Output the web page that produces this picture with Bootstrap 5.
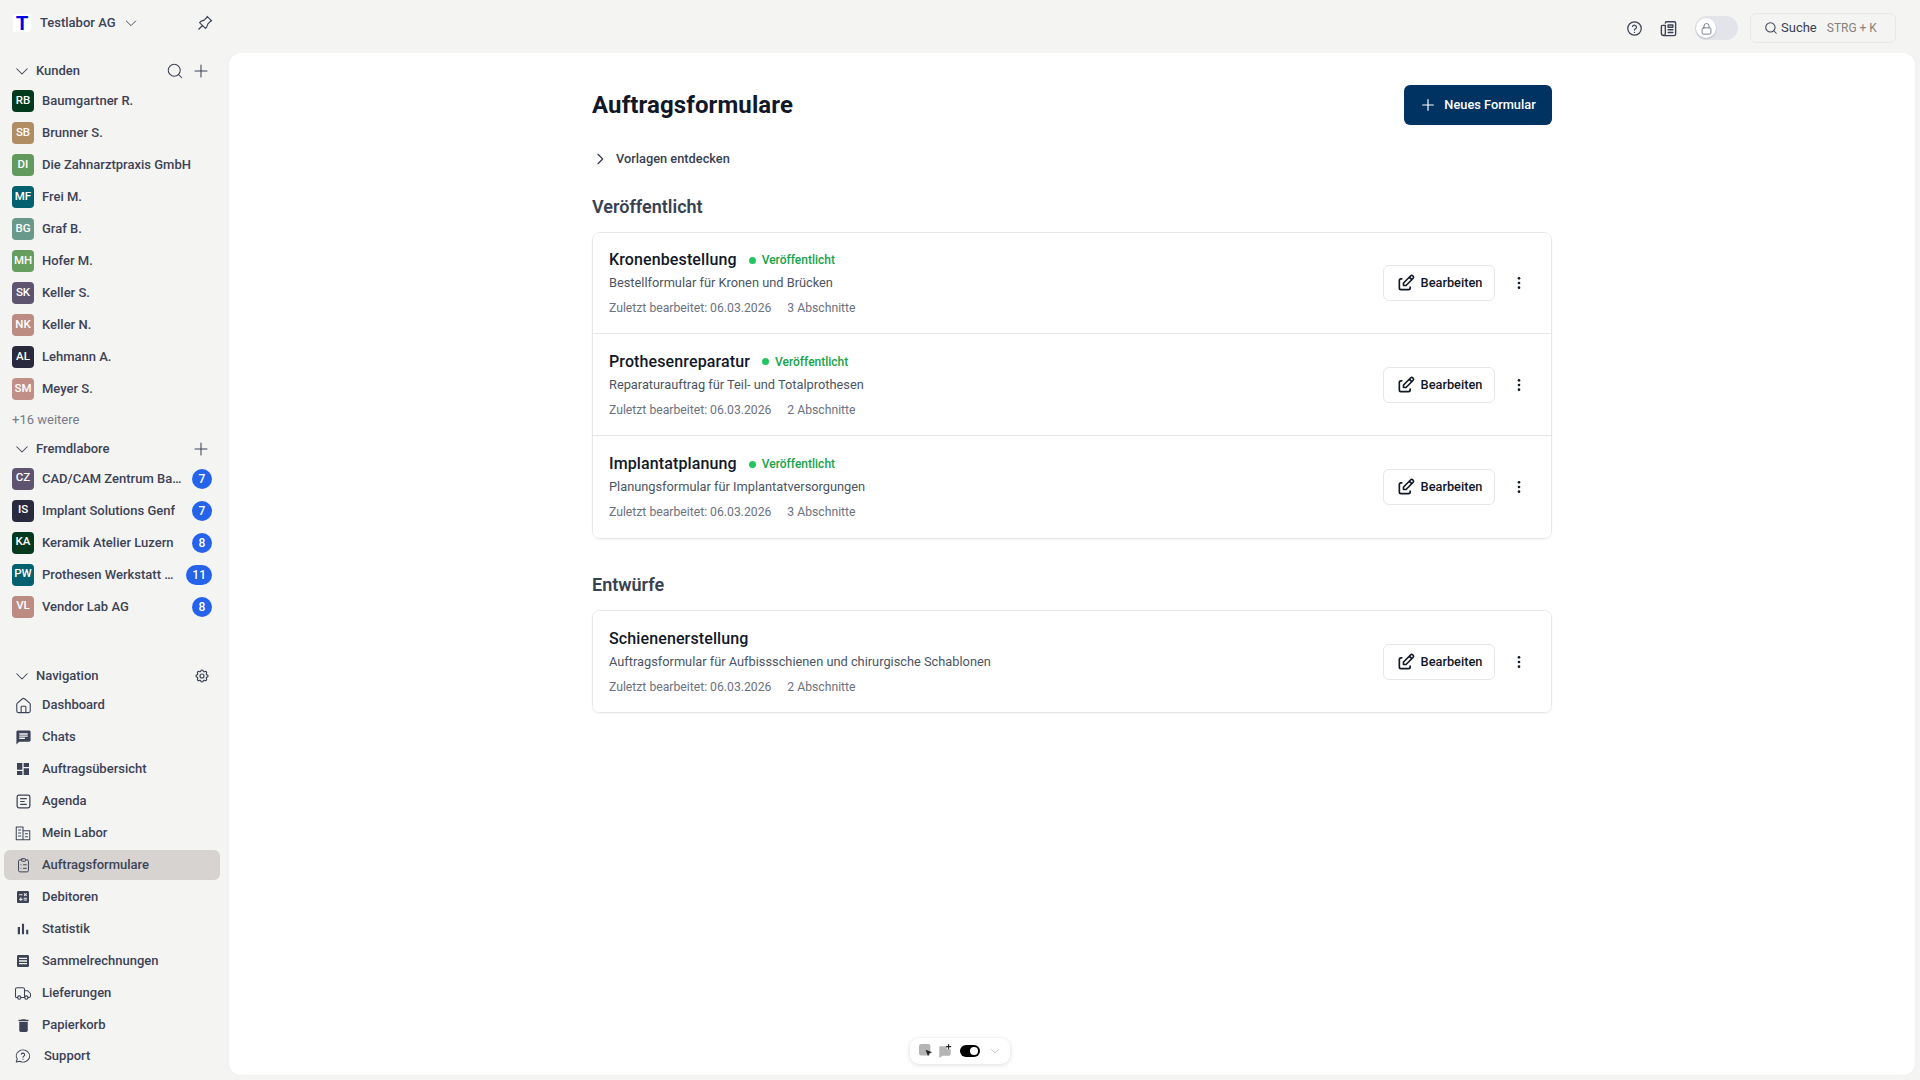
<!DOCTYPE html>
<html lang="de">

<head>
  <meta charset="UTF-8">
  <meta name="viewport" content="width=device-width, initial-scale=1.0">
  <title>Auftragsformulare</title>
  <link href="https://cdn.jsdelivr.net/npm/bootstrap@5.3.0/dist/css/bootstrap.min.css" rel="stylesheet">
  <style>
    html, body { height: 100%; }
    body { font-family: Roboto, "Liberation Sans", sans-serif; background: #f4f4f3; color: #3d4356; font-size: 13px; overflow: hidden; }
    svg { display: block; flex: none; }
    .ico { fill: none; stroke: currentColor; stroke-width: 1.75; stroke-linecap: round; stroke-linejoin: round; }
    .ico-thin { stroke-width: 1.4; }
    .ico-bold { stroke-width: 2; }
    .ico-fill { fill: currentColor; stroke: none; }

    .top-strip { height: 53px; padding: 0 24px 0 13px; }
    .top-left { margin-bottom: 7px; }
    .top-right { margin-top: 3px; }
    .brand-box { width: 18px; height: 18px; background: #fff; color: #0000e6; font: 700 20px/18px "Liberation Sans", sans-serif; text-align: center; border-radius: 2px; }
    .brand-name { font-weight: 500; margin-left: 9px; width: 75px; white-space: nowrap; }
    .pin-btn { margin-left: 56px; color: #3d4356; }
    .news-ico { margin-left: 16px; }
    .lock-switch { width: 43px; height: 24px; background: #e2e4e9; border-radius: 12px; padding: 2px 1px; margin-left: 17px; }
    .lock-knob { width: 20px; height: 20px; background: #fff; border-radius: 50%; box-shadow: 0 1px 2px rgba(0, 0, 0, .2); color: #6b7280; }
    .search-box { width: 146px; height: 30px; border: 1px solid #e8e8e8; border-radius: 6px; padding: 0 13px; margin-left: 12px; color: #374151; white-space: nowrap; }
    .search-ico { margin-right: 3px; }
    .search-key { color: #86817c; font-size: 12px; margin-left: 10px; }

    .side-wrap { width: 229px; padding: 4px 9px 0 4px; }
    .sec-head { height: 28px; padding: 0 10px 0 9px; font-weight: 500; }
    .sec-title { margin-left: 5px; }
    .head-gap { margin-right: 8px; }
    .side-item { height: 32px; padding: 0 8px; font-weight: 500; color: #3d4356; text-decoration: none; gap: 8px; }
    .av-box { width: 22px; height: 22px; border-radius: 4px; color: #fff; font-size: 11.5px; font-weight: 500; flex: none; }
    .av-up { padding-bottom: 2px; }
    .av-green { background: #033a1e; }
    .av-tan { background: #b08d62; }
    .av-leaf { background: #629a5e; }
    .av-teal { background: #04606e; }
    .av-sage { background: #69998a; }
    .av-moss { background: #659e5f; }
    .av-plum { background: #5e5470; }
    .av-rose { background: #bc8c82; }
    .av-ink { background: #2a2a3e; }
    .av-pink { background: #c18f87; }
    .more-line { height: 30px; padding-left: 8px; color: #767a8a; }
    .count-pill { min-width: 20px; height: 20px; background: #2563eb; color: #fff; border-radius: 10px; font-size: 12px; font-weight: 500; padding: 0 6px; margin-left: auto; flex: none; }
    .nav-gap { margin-top: 39px; }
    .nav-line { height: 30px; margin-bottom: 2px; padding: 0 8px; gap: 8px; font-weight: 500; color: #3d4356; text-decoration: none; border-radius: 6px; }
    .nav-line.is-active { background: #d6d3d1; }
    .nav-ico { width: 22px; flex: none; }
    .nav-last { margin-top: -1px; }
    .sup-text { margin-left: 2px; }

    .main-panel { flex: 1; background: #fff; margin-right: 5px; margin-bottom: 5px; border-radius: 12px; box-shadow: 0 0 2px rgba(0, 0, 0, .06); position: relative; }
    .main-inner { width: 960px; margin: 0 auto; padding-top: 32px; }
    .page-title { font-size: 24px; font-weight: 700; color: #111827; margin: 0; line-height: 40px; letter-spacing: .1px; }
    .btn-new { height: 40px; width: 148px; background: #003262; color: #fff; border: 0; border-radius: 6px; font-size: 12.8px; font-weight: 500; }
    .btn-new:hover { background: #003262; color: #fff; }
    .tpl-line { margin-top: 20px; height: 28px; font-size: 12.8px; font-weight: 500; gap: 8px; color: #374151; }
    .group-title { font-size: 18px; font-weight: 600; color: #374151; margin: 19px 0 0; line-height: 30px; height: 40px; }
    .form-card { border: 1px solid #e5e7eb; border-radius: 8px; box-shadow: 0 1px 2px rgba(0, 0, 0, .05); }
    .form-line { height: 102px; padding: 0 16px; border-color: #e5e7eb; }
    .form-line:first-child { height: 101px; }
    .form-name { font-size: 16px; font-weight: 500; color: #111827; letter-spacing: .12px; line-height: 24px; }
    .state-tag { color: #16a34a; font-size: 12px; font-weight: 500; margin-left: 12px; gap: 6px; }
    .state-dot { width: 7px; height: 7px; background: #22c55e; border-radius: 50%; }
    .form-desc { color: #4b5563; font-size: 12.8px; margin-top: 1px; line-height: 20px; }
    .form-meta { color: #6b7280; font-size: 12.2px; margin-top: 5px; gap: 16px; line-height: 20px; }
    .btn-edit { width: 112px; height: 36px; border: 1px solid #e5e7eb; border-radius: 6px; background: #fff; color: #111827; font-size: 12.8px; font-weight: 500; gap: 5px; padding: 0; }
    .kebab-box { width: 32px; margin-left: 8px; color: #111827; }
    .form-group-two { margin-top: 32px; }
    .form-group-two .group-title { margin-top: 0; height: 39px; line-height: 28px; }

    .float-tools { position: absolute; left: 50%; bottom: 11px; transform: translateX(-50%); width: 100px; height: 26px; margin-left: -112px; padding-left: 9px; background: #fff; border-radius: 9px; box-shadow: 0 1px 5px rgba(0, 0, 0, .14); gap: 5px; color: #b5b5b5; }
    .mini-toggle { width: 20px; height: 12px; background: #000; border-radius: 6px; padding: 2px; margin: 0 4px 0 3px; }
    .mini-knob { width: 8px; height: 8px; background: #fff; border-radius: 50%; margin-left: auto; }
  </style>
</head>

<body>
  <svg width="0" height="0" class="position-absolute">
    <defs>
      <symbol id="i-chev-down" viewBox="0 0 24 24"><path d="M5 9l7 7 7-7" /></symbol>
      <symbol id="i-chev-right" viewBox="0 0 24 24"><path d="M9 5l7 7-7 7" /></symbol>
      <symbol id="i-search" viewBox="0 0 24 24"><circle cx="11" cy="11" r="8" /><path d="M21 21l-4.3-4.3" /></symbol>
      <symbol id="i-plus" viewBox="0 0 24 24"><path d="M12 4v16M4 12h16" /></symbol>
      <symbol id="i-pin" viewBox="0 0 24 24"><path d="M15 4.500l-4 4-4 1.500-1.500 1.500 7 7 1.500-1.500 1.500-4 4-4M9 15l-4.500 4.500M14.500 4l5.500 5.500" /></symbol>
      <symbol id="i-help" viewBox="0 0 24 24"><circle cx="12" cy="12" r="9.500" /><path d="M9.200 9.200a2.900 2.900 0 0 1 5.600 1c0 1.900-2.800 2.500-2.800 4M12 17.400v.1" /></symbol>
      <symbol id="i-news" viewBox="0 0 24 24"><path d="M8 5a1.500 1.500 0 0 1 1.500-1.500h10A1.500 1.500 0 0 1 21 5v14a2 2 0 0 1-2 2H6a3 3 0 0 1-3-3V9.500A1.500 1.500 0 0 1 4.500 8H8v10.500a2 2 0 0 1-2 2M11.500 7.500h6v3h-6zM11.500 13.500h6M11.500 17h6" /></symbol>
      <symbol id="i-lock" viewBox="0 0 24 24"><rect x="5" y="11" width="14" height="10" rx="2" /><path d="M8 11V8a4 4 0 0 1 8 0v3" /></symbol>
      <symbol id="i-gear" viewBox="0 0 24 24"><path d="M10.300 4.300c.4-1.800 3-1.800 3.400 0a1.700 1.700 0 0 0 2.600 1.100c1.500-.9 3.300.8 2.400 2.400a1.700 1.700 0 0 0 1 2.500c1.800.4 1.800 3 0 3.400a1.700 1.700 0 0 0-1 2.600c.9 1.500-.9 3.300-2.400 2.400a1.700 1.700 0 0 0-2.600 1c-.4 1.800-3 1.800-3.400 0a1.700 1.700 0 0 0-2.500-1c-1.600.9-3.300-.9-2.400-2.400a1.700 1.700 0 0 0-1.100-2.600c-1.800-.4-1.800-3 0-3.400a1.700 1.700 0 0 0 1.100-2.500c-.9-1.600.8-3.300 2.400-2.400a1.700 1.700 0 0 0 2.500-1.100z" /><circle cx="12" cy="12" r="3" /></symbol>
      <symbol id="i-home" viewBox="0 0 24 24"><path d="M3.500 10.500a2 2 0 0 1 .7-1.500l6.500-5.500a2 2 0 0 1 2.600 0l6.500 5.500a2 2 0 0 1 .7 1.500V19a2 2 0 0 1-2 2H5.500a2 2 0 0 1-2-2zM9 21v-7a1 1 0 0 1 1-1h4a1 1 0 0 1 1 1v7" /></symbol>
      <symbol id="i-chat" viewBox="0 0 24 24"><path d="M20 2H4c-1.100 0-1.990.9-1.990 2L2 22l4-4h14c1.100 0 2-.9 2-2V4c0-1.100-.9-2-2-2zM6 9h12v2H6V9zm8 5H6v-2h8v2zm4-6H6V6h12v2z" /></symbol>
      <symbol id="i-dash" viewBox="0 0 24 24"><path d="M3 13h8V3H3v10zm0 8h8v-6H3v6zm10 0h8V11h-8v10zm0-18v6h8V3h-8z" /></symbol>
      <symbol id="i-agenda" viewBox="0 0 24 24"><rect x="3" y="3" width="18" height="18" rx="2.500" /><path d="M8 8h8M8 12h5M8 16h8" /></symbol>
      <symbol id="i-labor" viewBox="0 0 24 24"><path d="M3 21V4h9v17M12 9h9v12H3M6 8h3M6 12h3M6 16h3M15 13h3M15 17h3" /></symbol>
      <symbol id="i-clip" viewBox="0 0 24 24"><path d="M9 4H7a2 2 0 0 0-2 2v13a2 2 0 0 0 2 2h10a2 2 0 0 0 2-2V6a2 2 0 0 0-2-2h-2" /><rect x="9" y="2.500" width="6" height="3.500" rx="1" /><path d="M8.500 11h.01M8.500 16h.01M12 11h4M12 16h4" /></symbol>
      <symbol id="i-calc" viewBox="0 0 24 24"><path d="M19 3H5c-1.100 0-2 .9-2 2v14c0 1.100.9 2 2 2h14c1.100 0 2-.9 2-2V5c0-1.100-.9-2-2-2zm-5.970 4.060L14.090 6l1.410 1.410L16.910 6l1.060 1.060-1.410 1.410 1.410 1.410-1.060 1.060-1.410-1.400-1.410 1.410-1.060-1.060 1.410-1.410-1.410-1.420zm-6.780.66h5v1.500h-5v-1.500zM11.500 16h-2v2H8v-2H6v-1.500h2v-2h1.500v2h2V16zm6.500 1.250h-5v-1.500h5v1.500zm0-2.500h-5v-1.500h5v1.500z" /></symbol>
      <symbol id="i-bars" viewBox="0 0 24 24"><path d="M5 9.200h3V19H5zM10.600 5h2.800v14h-2.800zm5.600 8H19v6h-2.800z" /></symbol>
      <symbol id="i-list" viewBox="0 0 24 24"><path fill-rule="evenodd" d="M5 3h14a2 2 0 0 1 2 2v14a2 2 0 0 1-2 2H5a2 2 0 0 1-2-2V5a2 2 0 0 1 2-2zm1 4v2h12V7zm0 4v2h12v-2zm0 4v2h12v-2z" /></symbol>
      <symbol id="i-truck" viewBox="0 0 24 24"><path d="M5 18H3.500A1.500 1.500 0 0 1 2 16.500V7a2 2 0 0 1 2-2h8a2 2 0 0 1 2 2v11M9.500 18H14M18.500 18H20a2 2 0 0 0 2-2v-3l-3.500-4H14" /><circle cx="7" cy="18" r="2.200" /><circle cx="16.500" cy="18" r="2.200" /></symbol>
      <symbol id="i-trash" viewBox="0 0 24 24"><path d="M6 19c0 1.100.9 2 2 2h8c1.100 0 2-.9 2-2V7H6v12zM19 4h-3.500l-1-1h-5l-1 1H5v2h14V4z" /></symbol>
      <symbol id="i-support" viewBox="0 0 24 24"><path d="M3 20l1.300-3.900C2 12.700 2.900 8.300 6.400 5.800c3.500-2.500 8.500-2.300 11.700.5 3.200 2.800 3.600 7.300 1 10.500-2.600 3.200-7.500 4.200-11.400 2.200L3 20z" /><path d="M9.700 9.600a2.400 2.400 0 0 1 4.600.8c0 1.600-2.300 2-2.300 3.300M12 16.100v.1" /></symbol>
      <symbol id="i-edit" viewBox="0 0 24 24"><path d="M7 7H6a2 2 0 0 0-2 2v9a2 2 0 0 0 2 2h9a2 2 0 0 0 2-2v-1M20.400 6.600a2.100 2.100 0 0 0-3-3L9 12v3h3l8.400-8.400zM16 5l3 3" /></symbol>
      <symbol id="i-dots" viewBox="0 0 24 24"><circle cx="12" cy="5" r="2" /><circle cx="12" cy="12" r="2" /><circle cx="12" cy="19" r="2" /></symbol>
      <symbol id="i-tool-pick" viewBox="0 0 16 16"><rect x="0" y="0" width="13" height="13" rx="2.500" /><path fill="#222" d="M7.500 6.500l7.500 2.800-3.200 1.300-1.400 3.400z" /></symbol>
      <symbol id="i-tool-add" viewBox="0 0 16 16"><path d="M2 2.500h8v3.500h4.500v5.500a2 2 0 0 1-2 2H5l-3.500 2.500V4a1.500 1.500 0 0 1 .5-1.500z" /><path fill="#222" d="M11.500 0h1.200v2.400h2.300v1.200h-2.300V6h-1.200V3.600H9.200V2.400h2.300z" /></symbol>
    </defs>
  </svg>

  <div class="d-flex flex-column h-100">
    <header class="top-strip d-flex align-items-center flex-none">
      <div class="top-left d-flex align-items-center">
        <div class="brand-box">T</div>
        <div class="brand-name">Testlabor AG</div>
        <svg class="ico ico-thin ms-2" width="16" height="16"><use href="#i-chev-down" /></svg>
        <svg class="ico ico-thin pin-btn" width="20" height="20"><use href="#i-pin" /></svg>
      </div>
      <div class="top-right ms-auto d-flex align-items-center">
        <svg class="ico" width="17" height="17"><use href="#i-help" /></svg>
        <svg class="ico news-ico" width="19" height="19"><use href="#i-news" /></svg>
        <div class="lock-switch"><div class="lock-knob d-flex align-items-center justify-content-center"><svg class="ico ico-thin" width="15" height="15"><use href="#i-lock" /></svg></div></div>
        <div class="search-box d-flex align-items-center">
          <svg class="ico search-ico" width="14" height="14"><use href="#i-search" /></svg>
          <span>Suche</span><span class="search-key">STRG + K</span>
        </div>
      </div>
    </header>

    <div class="d-flex flex-grow-1 overflow-hidden">
      <aside class="side-wrap flex-none">
        <div class="sec-head d-flex align-items-center">
          <svg class="ico ico-thin" width="18" height="18"><use href="#i-chev-down" /></svg>
          <span class="sec-title flex-grow-1">Kunden</span>
          <svg class="ico ico-thin head-gap" width="18" height="18"><use href="#i-search" /></svg>
          <svg class="ico ico-thin" width="18" height="18"><use href="#i-plus" /></svg>
        </div>
        <a class="side-item d-flex align-items-center" href="#"><span class="av-box av-green d-flex align-items-center justify-content-center">RB</span><span>Baumgartner R.</span></a>
        <a class="side-item d-flex align-items-center" href="#"><span class="av-box av-tan d-flex align-items-center justify-content-center">SB</span><span>Brunner S.</span></a>
        <a class="side-item d-flex align-items-center" href="#"><span class="av-box av-leaf d-flex align-items-center justify-content-center">DI</span><span>Die Zahnarztpraxis GmbH</span></a>
        <a class="side-item d-flex align-items-center" href="#"><span class="av-box av-teal d-flex align-items-center justify-content-center">MF</span><span>Frei M.</span></a>
        <a class="side-item d-flex align-items-center" href="#"><span class="av-box av-sage d-flex align-items-center justify-content-center">BG</span><span>Graf B.</span></a>
        <a class="side-item d-flex align-items-center" href="#"><span class="av-box av-moss d-flex align-items-center justify-content-center">MH</span><span>Hofer M.</span></a>
        <a class="side-item d-flex align-items-center" href="#"><span class="av-box av-plum d-flex align-items-center justify-content-center">SK</span><span>Keller S.</span></a>
        <a class="side-item d-flex align-items-center" href="#"><span class="av-box av-rose d-flex align-items-center justify-content-center">NK</span><span>Keller N.</span></a>
        <a class="side-item d-flex align-items-center" href="#"><span class="av-box av-ink d-flex align-items-center justify-content-center">AL</span><span>Lehmann A.</span></a>
        <a class="side-item d-flex align-items-center" href="#"><span class="av-box av-pink d-flex align-items-center justify-content-center">SM</span><span>Meyer S.</span></a>
        <div class="more-line d-flex align-items-center">+16 weitere</div>

        <div class="sec-head d-flex align-items-center">
          <svg class="ico ico-thin" width="18" height="18"><use href="#i-chev-down" /></svg>
          <span class="sec-title flex-grow-1">Fremdlabore</span>
          <svg class="ico ico-thin" width="18" height="18"><use href="#i-plus" /></svg>
        </div>
        <a class="side-item d-flex align-items-center" href="#"><span class="av-box av-up av-plum d-flex align-items-center justify-content-center">CZ</span><span class="text-truncate">CAD/CAM Zentrum Basel</span><span class="count-pill d-flex align-items-center justify-content-center">7</span></a>
        <a class="side-item d-flex align-items-center" href="#"><span class="av-box av-up av-ink d-flex align-items-center justify-content-center">IS</span><span class="text-truncate">Implant Solutions Genf</span><span class="count-pill d-flex align-items-center justify-content-center">7</span></a>
        <a class="side-item d-flex align-items-center" href="#"><span class="av-box av-up av-green d-flex align-items-center justify-content-center">KA</span><span class="text-truncate">Keramik Atelier Luzern</span><span class="count-pill d-flex align-items-center justify-content-center">8</span></a>
        <a class="side-item d-flex align-items-center" href="#"><span class="av-box av-up av-teal d-flex align-items-center justify-content-center">PW</span><span class="text-truncate">Prothesen Werkstatt Zürich</span><span class="count-pill d-flex align-items-center justify-content-center">11</span></a>
        <a class="side-item d-flex align-items-center" href="#"><span class="av-box av-up av-rose d-flex align-items-center justify-content-center">VL</span><span class="text-truncate">Vendor Lab AG</span><span class="count-pill d-flex align-items-center justify-content-center">8</span></a>

        <div class="sec-head nav-gap d-flex align-items-center">
          <svg class="ico ico-thin" width="18" height="18"><use href="#i-chev-down" /></svg>
          <span class="sec-title flex-grow-1">Navigation</span>
          <svg class="ico" width="16" height="16"><use href="#i-gear" /></svg>
        </div>
        <nav class="d-flex flex-column">
          <a class="nav-line d-flex align-items-center" href="#"><span class="nav-ico d-flex justify-content-center"><svg class="ico ico-thin" width="19" height="19"><use href="#i-home" /></svg></span>Dashboard</a>
          <a class="nav-line d-flex align-items-center" href="#"><span class="nav-ico d-flex justify-content-center"><svg class="ico-fill" width="17" height="17"><use href="#i-chat" /></svg></span>Chats</a>
          <a class="nav-line d-flex align-items-center" href="#"><span class="nav-ico d-flex justify-content-center"><svg class="ico-fill" width="16" height="16"><use href="#i-dash" /></svg></span>Auftragsübersicht</a>
          <a class="nav-line d-flex align-items-center" href="#"><span class="nav-ico d-flex justify-content-center"><svg class="ico" width="17" height="17"><use href="#i-agenda" /></svg></span>Agenda</a>
          <a class="nav-line d-flex align-items-center" href="#"><span class="nav-ico d-flex justify-content-center"><svg class="ico ico-thin" width="18" height="18"><use href="#i-labor" /></svg></span>Mein Labor</a>
          <a class="nav-line is-active d-flex align-items-center" href="#"><span class="nav-ico d-flex justify-content-center"><svg class="ico ico-thin" width="17" height="17"><use href="#i-clip" /></svg></span>Auftragsformulare</a>
          <a class="nav-line d-flex align-items-center" href="#"><span class="nav-ico d-flex justify-content-center"><svg class="ico-fill" width="16" height="16"><use href="#i-calc" /></svg></span>Debitoren</a>
          <a class="nav-line d-flex align-items-center" href="#"><span class="nav-ico d-flex justify-content-center"><svg class="ico-fill" width="18" height="18"><use href="#i-bars" /></svg></span>Statistik</a>
          <a class="nav-line d-flex align-items-center" href="#"><span class="nav-ico d-flex justify-content-center"><svg class="ico-fill" width="16" height="16"><use href="#i-list" /></svg></span>Sammelrechnungen</a>
          <a class="nav-line d-flex align-items-center" href="#"><span class="nav-ico d-flex justify-content-center"><svg class="ico ico-thin" width="18" height="18"><use href="#i-truck" /></svg></span>Lieferungen</a>
          <a class="nav-line d-flex align-items-center" href="#"><span class="nav-ico d-flex justify-content-center"><svg class="ico-fill" width="17" height="17"><use href="#i-trash" /></svg></span>Papierkorb</a>
          <a class="nav-line nav-last d-flex align-items-center" href="#"><span class="nav-ico d-flex justify-content-center"><svg class="ico ico-thin" width="18" height="18"><use href="#i-support" /></svg></span><span class="sup-text">Support</span></a>
        </nav>
      </aside>

      <main class="main-panel">
        <div class="main-inner">
          <div class="d-flex align-items-center justify-content-between">
            <h1 class="page-title">Auftragsformulare</h1>
            <button class="btn btn-new d-flex align-items-center justify-content-center gap-2" type="button">
              <svg class="ico" width="16" height="16"><use href="#i-plus" /></svg>Neues Formular
            </button>
          </div>
          <div class="tpl-line d-flex align-items-center"><svg class="ico ico-bold" width="16" height="16"><use href="#i-chev-right" /></svg>Vorlagen entdecken</div>

          <h2 class="group-title">Veröffentlicht</h2>
          <div class="form-card card">
            <div class="list-group list-group-flush rounded-2">
              <div class="list-group-item form-line d-flex align-items-center">
                <div class="flex-grow-1">
                  <div class="d-flex align-items-center"><span class="form-name">Kronenbestellung</span><span class="state-tag d-flex align-items-center"><span class="state-dot"></span>Veröffentlicht</span></div>
                  <div class="form-desc">Bestellformular für Kronen und Brücken</div>
                  <div class="form-meta d-flex"><span>Zuletzt bearbeitet: 06.03.2026</span><span>3 Abschnitte</span></div>
                </div>
                <button class="btn btn-edit d-flex align-items-center justify-content-center" type="button"><svg class="ico ico-bold" width="20" height="20"><use href="#i-edit" /></svg>Bearbeiten</button>
                <span class="kebab-box d-flex justify-content-center"><svg class="ico-fill" width="16" height="16"><use href="#i-dots" /></svg></span>
              </div>
              <div class="list-group-item form-line d-flex align-items-center">
                <div class="flex-grow-1">
                  <div class="d-flex align-items-center"><span class="form-name">Prothesenreparatur</span><span class="state-tag d-flex align-items-center"><span class="state-dot"></span>Veröffentlicht</span></div>
                  <div class="form-desc">Reparaturauftrag für Teil- und Totalprothesen</div>
                  <div class="form-meta d-flex"><span>Zuletzt bearbeitet: 06.03.2026</span><span>2 Abschnitte</span></div>
                </div>
                <button class="btn btn-edit d-flex align-items-center justify-content-center" type="button"><svg class="ico ico-bold" width="20" height="20"><use href="#i-edit" /></svg>Bearbeiten</button>
                <span class="kebab-box d-flex justify-content-center"><svg class="ico-fill" width="16" height="16"><use href="#i-dots" /></svg></span>
              </div>
              <div class="list-group-item form-line d-flex align-items-center">
                <div class="flex-grow-1">
                  <div class="d-flex align-items-center"><span class="form-name">Implantatplanung</span><span class="state-tag d-flex align-items-center"><span class="state-dot"></span>Veröffentlicht</span></div>
                  <div class="form-desc">Planungsformular für Implantatversorgungen</div>
                  <div class="form-meta d-flex"><span>Zuletzt bearbeitet: 06.03.2026</span><span>3 Abschnitte</span></div>
                </div>
                <button class="btn btn-edit d-flex align-items-center justify-content-center" type="button"><svg class="ico ico-bold" width="20" height="20"><use href="#i-edit" /></svg>Bearbeiten</button>
                <span class="kebab-box d-flex justify-content-center"><svg class="ico-fill" width="16" height="16"><use href="#i-dots" /></svg></span>
              </div>
            </div>
          </div>

          <div class="form-group-two">
            <h2 class="group-title">Entwürfe</h2>
            <div class="form-card card">
              <div class="list-group list-group-flush rounded-2">
                <div class="list-group-item form-line d-flex align-items-center">
                  <div class="flex-grow-1">
                    <div class="d-flex align-items-center"><span class="form-name">Schienenerstellung</span></div>
                    <div class="form-desc">Auftragsformular für Aufbissschienen und chirurgische Schablonen</div>
                    <div class="form-meta d-flex"><span>Zuletzt bearbeitet: 06.03.2026</span><span>2 Abschnitte</span></div>
                  </div>
                  <button class="btn btn-edit d-flex align-items-center justify-content-center" type="button"><svg class="ico ico-bold" width="20" height="20"><use href="#i-edit" /></svg>Bearbeiten</button>
                  <span class="kebab-box d-flex justify-content-center"><svg class="ico-fill" width="16" height="16"><use href="#i-dots" /></svg></span>
                </div>
              </div>
            </div>
          </div>
        </div>

        <div class="float-tools d-flex align-items-center">
          <svg class="ico-fill" width="14" height="14"><use href="#i-tool-pick" /></svg>
          <svg class="ico-fill" width="14" height="14"><use href="#i-tool-add" /></svg>
          <span class="mini-toggle d-flex"><span class="mini-knob"></span></span>
          <svg class="ico ico-thin" width="12" height="12"><use href="#i-chev-down" /></svg>
        </div>
      </main>
    </div>
  </div>
  <script src="https://cdn.jsdelivr.net/npm/bootstrap@5.3.0/dist/js/bootstrap.bundle.min.js"></script>
</body>

</html>
